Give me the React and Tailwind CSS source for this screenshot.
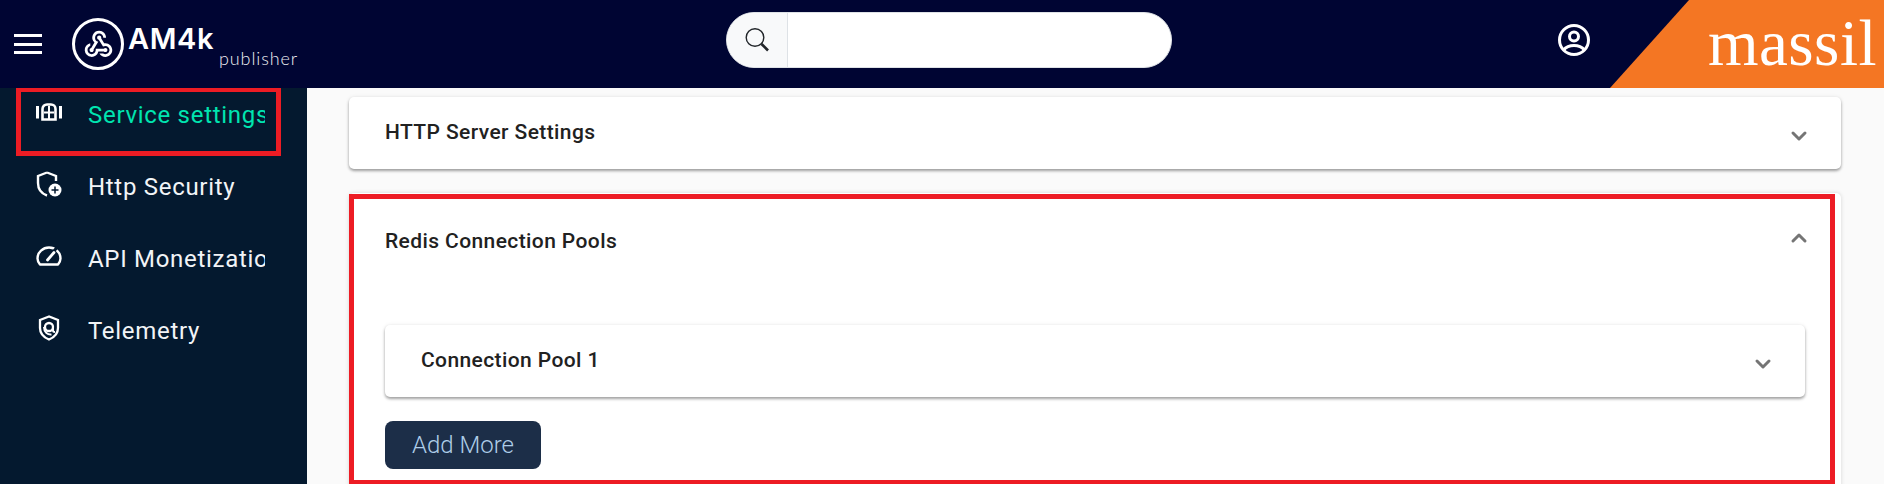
import React from 'react';
import { ChevronDown, ChevronUp } from 'lucide-react';
import { MdWebhook } from 'react-icons/md';

const ServiceIcon = () => (
    <svg width="26" height="18" viewBox="0 0 26 18" fill="none" stroke="white">
        <path d="M1.500 3v12.500M24.500 3v12.500" strokeWidth="3" />
        <path d="M6.500 16.500V6c0-2.800 2-4.500 4.500-4.500h4c2.500 0 4.500 1.700 4.500 4.500v10.500z" strokeWidth="2.600" />
        <path d="M13 3v13M8 9.500h10" strokeWidth="2" />
    </svg>
);

const ShieldPlusIcon = () => (
    <svg width="26" height="26" viewBox="0 0 26 26" fill="none">
        <path d="M11 1.500 2 5v7c0 6 3.500 10.500 9 12.500M11 1.500 20 5v5" stroke="white" strokeWidth="2.400" />
        <circle cx="19" cy="19" r="6.500" fill="white" />
        <path d="M19 15.500v7M15.500 19h7" stroke="#04192f" strokeWidth="1.500" />
    </svg>
);

const GaugeIcon = () => (
    <svg width="26" height="20" viewBox="0 0 26 20" fill="none" stroke="white" strokeWidth="2.400">
        <path d="M4 18.500h18c1.500-1.800 2.500-3.700 2.500-6C24.500 6 19 1.500 13 1.500S1.500 6 1.500 12.500c0 2.300 1 4.200 2.500 6z" strokeLinejoin="round" />
        <path d="M21.500 1 17 6" stroke="#04192f" strokeWidth="3" />
        <path d="M11.500 14 18 6.500" strokeWidth="2.800" strokeLinecap="round" />
    </svg>
);

const ShieldAtIcon = () => (
    <svg width="22" height="26" viewBox="0 0 22 26" fill="none" stroke="white" strokeWidth="2.300">
        <path d="M11 1.500 2 5v8c0 5.500 4 9.500 9 11.500 5-2 9-6 9-11.500V5z" />
        <circle cx="11" cy="12" r="4" />
        <path d="M15 12v3.500c0 1 .8 1.500 2 1.500M13.500 19.500C10 20 6 17.500 6 12" strokeWidth="2" />
    </svg>
);

const UserIcon = () => (
    <svg width="32" height="32" viewBox="0 0 32 32" fill="none" stroke="white" strokeWidth="3">
        <circle cx="16" cy="16" r="14.500" />
        <circle cx="16" cy="12.500" r="4.500" />
        <path d="M5.500 26C8 23 12 21.500 16 21.500s8 1.500 10.500 4.500" />
    </svg>
);

const SearchIcon = () => (
    <svg width="26" height="26" viewBox="0 0 26 26" fill="none" stroke="#212529">
        <circle cx="11" cy="10.500" r="8.800" strokeWidth="1.400" />
        <path d="M17.500 17 24 23.500" strokeWidth="2.600" />
    </svg>
);

const menuItems = [
    { label: 'Service settings', icon: <ServiceIcon />, active: true },
    { label: 'Http Security', icon: <ShieldPlusIcon /> },
    { label: 'API Monetization', icon: <GaugeIcon /> },
    { label: 'Telemetry', icon: <ShieldAtIcon /> },
];

const Header = () => (
    <header className="flex h-[88px] shrink-0 items-center bg-[#000533] relative">
        <div className="ml-[14px] flex w-[28px] flex-col gap-[5.500px]">
            <span className="h-[3px] bg-white"></span>
            <span className="h-[3px] bg-white"></span>
            <span className="h-[3px] bg-white"></span>
        </div>
        <div className="ml-[30px] flex h-[52px] w-[52px] items-center justify-center rounded-full border-[3px] border-white">
            <MdWebhook size={33} color="white" />
        </div>
        <div className="ml-[4px] mt-[4px] flex w-[170px] flex-col text-white">
            <span className="font-['Inter',sans-serif] text-[29px] leading-[28px] font-semibold tracking-[0.6px]">AM4k</span>
            <span className="ml-[91px] -mt-[4px] font-['Lato',sans-serif] text-[18px] leading-[18px] font-light tracking-[0.9px] text-[#eeeef2]">publisher</span>
        </div>
        <div className="absolute left-[726px] top-[12px] flex h-[56px] w-[446px] overflow-hidden rounded-full border border-[#dee2e6] bg-white">
            <div className="flex w-[61px] items-center justify-center border-r border-[#dee2e6] bg-[#f8f9fa]">
                <SearchIcon />
            </div>
        </div>
        <div className="absolute left-[1558px] top-[24px]">
            <UserIcon />
        </div>
        <div className="absolute right-0 top-0 flex h-[88px] w-[274px] justify-end bg-[#f47623] pr-[7px] [clip-path:polygon(79px_0,100%_0,100%_100%,0_100%)]">
            <span className="font-['Liberation_Serif',serif] text-[65px] leading-[86px] tracking-[0.5px] text-white">massil</span>
        </div>
    </header>
);

const Sidebar = () => (
    <aside className="relative w-[307px] shrink-0 overflow-hidden bg-[#04192f]">
        <div className="-mt-[9px] flex flex-col">
            {menuItems.map((item) => (
                <div key={item.label} className="flex h-[72px] items-center">
                    <div className="ml-[36px] flex w-[26px] justify-center -mt-[6px]">{item.icon}</div>
                    <div className={`ml-[26px] w-[177px] overflow-hidden whitespace-nowrap font-['Roboto',sans-serif] text-[24px] tracking-[0.7px] ${item.active ? 'text-[#00e5b0]' : 'text-[#f2f4f7]'}`}>
                        {item.label}
                    </div>
                </div>
            ))}
        </div>
        <div className="absolute left-[16px] top-[-1px] h-[69px] w-[265px] border-[5px] border-[#ed1c24]"></div>
    </aside>
);

const Title = ({ children }) => (
    <span className="font-['Roboto',sans-serif] text-[21px] font-medium tracking-[0.4px] text-[#212121]">{children}</span>
);

const CollapsedCard = ({ title, className }) => (
    <div className={`flex h-[72px] shrink-0 items-center justify-between rounded-[5px] bg-white pl-[36px] pr-[30px] shadow-[0_2px_3px_rgba(0,0,0,0.35),0_0_4px_rgba(0,0,0,0.08)] ${className}`}>
        <Title>{title}</Title>
        <ChevronDown size={24} color="#757575" strokeWidth={3} className="mt-[6px]" />
    </div>
);

const App = () => {
    return (
        <div className="flex h-[484px] w-[1884px] flex-col overflow-hidden bg-[#fafafa]">
            <Header />
            <div className="flex min-h-0 flex-1">
                <Sidebar />
                <main className="flex flex-1 flex-col gap-[24px] pl-[42px] pr-[43px] pt-[9px]">
                    <CollapsedCard title="HTTP Server Settings" />
                    <section className="relative h-[320px] shrink-0 rounded-[5px] bg-white px-[36px] pt-[33px] shadow-[0_0_4px_rgba(0,0,0,0.15)]">
                        <div className="flex items-center justify-between">
                            <Title>Redis Connection Pools</Title>
                            <div className="-mr-[6px] -mt-[8px]"><ChevronUp size={24} color="#757575" strokeWidth={3} /></div>
                        </div>
                        <CollapsedCard title="Connection Pool 1" className="mt-[67px]" />
                        <button className="mt-[24px] h-[48px] w-[156px] rounded-[8px] bg-[#1c2e48] font-['Roboto',sans-serif] text-[24px] font-light text-[#aecde8]">
                            Add More
                        </button>
                        <div className="absolute left-0 right-[6px] top-[1px] h-[291px] border-[5px] border-[#ed1c24]"></div>
                    </section>
                </main>
            </div>
        </div>
    );
};

export default App;
